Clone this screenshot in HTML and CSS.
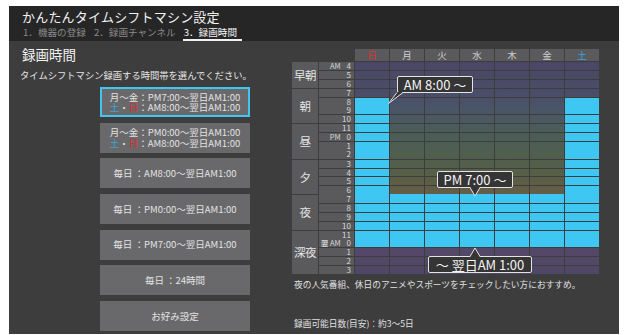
FILE: index.html
```html
<!DOCTYPE html>
<html lang="ja">
<head>
<meta charset="utf-8">
<title>かんたんタイムシフトマシン設定</title>
<link rel="stylesheet" href="styles.css">
</head>
<body>
<div class="screen">
  <header class="hdr">
    <div class="title">かんたんタイムシフトマシン設定</div>
    <nav class="tabs">
      <span class="tab">1．機器の登録</span>
      <span class="tab">2．録画チャンネル</span>
      <span class="tab on">3．録画時間</span>
    </nav>
  </header>
  <main class="main">
    <section class="left">
      <h1 class="sec">録画時間</h1>
      <p class="desc">タイムシフトマシン録画する時間帯を選んでください。</p>
      <div class="btns">
        <div class="btn sel"><span>月〜金：PM7:00〜翌日AM1:00</span><span><i class="sat">土</i>・<i class="sun">日</i>：AM8:00〜翌日AM1:00</span></div>
        <div class="btn"><span>月〜金：PM0:00〜翌日AM1:00</span><span><i class="sat">土</i>・<i class="sun">日</i>：AM8:00〜翌日AM1:00</span></div>
        <div class="btn"><span>毎日 ：AM8:00〜翌日AM1:00</span></div>
        <div class="btn"><span>毎日 ：PM0:00〜翌日AM1:00</span></div>
        <div class="btn"><span>毎日 ：PM7:00〜翌日AM1:00</span></div>
        <div class="btn"><span>毎日 ：24時間</span></div>
        <div class="btn"><span>お好み設定</span></div>
      </div>
    </section>
    <section class="right">
      <div class="chart">
        <div class="col gcol">
          <div class="sp"></div>
          <div class="grp r3">早朝</div>
          <div class="grp r4">朝</div>
          <div class="grp r4">昼</div>
          <div class="grp r4">夕</div>
          <div class="grp r4">夜</div>
          <div class="grp r5">深夜</div>
        </div>
        <div class="col hcol">
          <div class="sp"></div>
          <div class="h"><span><em>AM</em>4</span></div>
          <div class="h"><span>5</span></div>
          <div class="h"><span>6</span></div>
          <div class="h"><span>7</span></div>
          <div class="h r2"><span>8</span><span>9</span></div>
          <div class="h"><span>10</span></div>
          <div class="h"><span>11</span></div>
          <div class="h"><span><em>PM</em>0</span></div>
          <div class="h r2"><span>1</span><span>2</span></div>
          <div class="h"><span>3</span></div>
          <div class="h"><span>4</span></div>
          <div class="h"><span>5</span></div>
          <div class="h r2"><span>6</span><span>7</span></div>
          <div class="h"><span>8</span></div>
          <div class="h"><span>9</span></div>
          <div class="h"><span>10</span></div>
          <div class="h r2"><span>11</span><span><b>翌</b><em>AM</em>0</span></div>
          <div class="h"><span>1</span></div>
          <div class="h"><span>2</span></div>
          <div class="h"><span>3</span></div>
        </div>

        <div class="col dcol">
          <div class="dh sun">日</div>
          <div class="g"></div><div class="g"></div><div class="g"></div><div class="g"></div>
          <div class="b r2"></div><div class="b"></div><div class="b"></div><div class="b"></div>
          <div class="b r2"></div><div class="b"></div><div class="b"></div><div class="b"></div>
          <div class="b r2"></div><div class="b"></div><div class="b"></div><div class="b"></div>
          <div class="b r2"></div><div class="g"></div><div class="g"></div><div class="g"></div>
        </div>
        <div class="col dcol">
          <div class="dh">月</div>
          <div class="g"></div><div class="g"></div><div class="g"></div><div class="g"></div>
          <div class="g r2"></div><div class="g"></div><div class="g"></div><div class="g"></div>
          <div class="g r2"></div><div class="g"></div><div class="g"></div><div class="g"></div>
          <div class="x r2"></div><div class="b"></div><div class="b"></div><div class="b"></div>
          <div class="b r2"></div><div class="g"></div><div class="g"></div><div class="g"></div>
        </div>
        <div class="col dcol">
          <div class="dh">火</div>
          <div class="g"></div><div class="g"></div><div class="g"></div><div class="g"></div>
          <div class="g r2"></div><div class="g"></div><div class="g"></div><div class="g"></div>
          <div class="g r2"></div><div class="g"></div><div class="g"></div><div class="g"></div>
          <div class="x r2"></div><div class="b"></div><div class="b"></div><div class="b"></div>
          <div class="b r2"></div><div class="g"></div><div class="g"></div><div class="g"></div>
        </div>
        <div class="col dcol">
          <div class="dh">水</div>
          <div class="g"></div><div class="g"></div><div class="g"></div><div class="g"></div>
          <div class="g r2"></div><div class="g"></div><div class="g"></div><div class="g"></div>
          <div class="g r2"></div><div class="g"></div><div class="g"></div><div class="g"></div>
          <div class="x r2"></div><div class="b"></div><div class="b"></div><div class="b"></div>
          <div class="b r2"></div><div class="g"></div><div class="g"></div><div class="g"></div>
        </div>
        <div class="col dcol">
          <div class="dh">木</div>
          <div class="g"></div><div class="g"></div><div class="g"></div><div class="g"></div>
          <div class="g r2"></div><div class="g"></div><div class="g"></div><div class="g"></div>
          <div class="g r2"></div><div class="g"></div><div class="g"></div><div class="g"></div>
          <div class="x r2"></div><div class="b"></div><div class="b"></div><div class="b"></div>
          <div class="b r2"></div><div class="g"></div><div class="g"></div><div class="g"></div>
        </div>
        <div class="col dcol">
          <div class="dh">金</div>
          <div class="g"></div><div class="g"></div><div class="g"></div><div class="g"></div>
          <div class="g r2"></div><div class="g"></div><div class="g"></div><div class="g"></div>
          <div class="g r2"></div><div class="g"></div><div class="g"></div><div class="g"></div>
          <div class="x r2"></div><div class="b"></div><div class="b"></div><div class="b"></div>
          <div class="b r2"></div><div class="g"></div><div class="g"></div><div class="g"></div>
        </div>
        <div class="col dcol">
          <div class="dh sat">土</div>
          <div class="g"></div><div class="g"></div><div class="g"></div><div class="g"></div>
          <div class="b r2"></div><div class="b"></div><div class="b"></div><div class="b"></div>
          <div class="b r2"></div><div class="b"></div><div class="b"></div><div class="b"></div>
          <div class="b r2"></div><div class="b"></div><div class="b"></div><div class="b"></div>
          <div class="b r2"></div><div class="g"></div><div class="g"></div><div class="g"></div>
        </div>

        <div class="tip tip1">AM 8:00 〜
          <svg class="tail tail1" width="16" height="12" viewBox="0 0 16 12"><polygon points="9,0 15,0 0.5,11.5" fill="#353535"/><polyline points="9,0.5 0.5,11.5 15,0.5" fill="none" stroke="#e4e4e4" stroke-width="1"/></svg>
        </div>
        <div class="tip tip2">PM 7:00 〜
          <svg class="tail tail2" width="12" height="10" viewBox="0 0 12 10"><polygon points="1,0 11,0 6,9" fill="#353535"/><polyline points="1,0.5 6,9 11,0.5" fill="none" stroke="#e4e4e4" stroke-width="1"/></svg>
        </div>
        <div class="tip tip3">〜 翌日AM 1:00
          <svg class="tail tail3" width="12" height="10" viewBox="0 0 12 10"><polygon points="1,10 11,10 6,1" fill="#353535"/><polyline points="1,9.5 6,1 11,9.5" fill="none" stroke="#e4e4e4" stroke-width="1"/></svg>
        </div>
      </div>
      <p class="note">夜の人気番組、休日のアニメやスポーツをチェックしたい方におすすめ。</p>
      <p class="days">録画可能日数(目安)：約3〜5日</p>
    </section>
  </main>
</div>
</body>
</html>
```

FILE: styles.css
```css
html, body {
  margin: 0;
  padding: 0;
  background: #ffffff;
}
body {
  font-family: "Noto Sans CJK JP", "Noto Sans", sans-serif;
}

.screen {
  margin: 6px 0 0 9px;
  width: 610px;
  height: 328px;
  background: #3d3d3d;
  display: flex;
  flex-direction: column;
  overflow: hidden;
}

/* header */
.hdr {
  flex: none;
  height: 35px;
  box-sizing: border-box;
  background: #262626;
  padding: 3px 0 0 13px;
}
.title {
  font-size: 13px;
  line-height: 15px;
  color: #f2f2f2;
  letter-spacing: 0.2px;
}
.tabs {
  display: flex;
  margin-top: 3px;
  font-size: 9.6px;
  line-height: 11px;
  color: #8a8a8a;
}
.tab {
  padding: 0 1px 3px;
  margin-right: 6px;
}
.tab.on {
  color: #f5f5f5;
  padding: 0 5px 1px 1px;
  border-bottom: 2px solid #f2f2f2;
}

/* main */
.main {
  flex: 1;
  display: flex;
}
.left {
  flex: none;
  width: 283px;
  box-sizing: border-box;
  padding-left: 11px;
}
.sec {
  margin: 5px 0 0 2px;
  font-size: 13.5px;
  line-height: 16px;
  font-weight: normal;
  color: #f0f0f0;
}
.desc {
  margin: 7px 0 0;
  font-size: 9.3px;
  line-height: 12px;
  color: #e6e6e6;
  white-space: nowrap;
}
.btns {
  margin: 6px 0 0 80px;
  display: flex;
  flex-direction: column;
  gap: 5.67px;
}
.btn {
  width: 150px;
  height: 30px;
  box-sizing: border-box;
  background: #69696b;
  color: #e2e2e2;
  font-size: 9.5px;
  line-height: 10.5px;
  display: flex;
  flex-direction: column;
  justify-content: center;
  align-items: center;
  white-space: nowrap;
}
.btn.sel {
  border: 2px solid #42c6f0;
}
.sat {
  color: #38a6d6;
  font-style: normal;
}
.sun {
  color: #e02a2a;
  font-style: normal;
}

/* right / chart */
.right {
  padding-top: 8px;
}
.chart {
  display: flex;
  gap: 1px;
  position: relative;
}
.col {
  display: grid;
  grid-template-rows: 12px repeat(24, 7.875px);
  row-gap: 1px;
}
.gcol { width: 26px; }
.hcol { width: 35px; }
.dcol { width: 34px; }

.r2 { grid-row: span 2; }
.r3 { grid-row: span 3; }
.r4 { grid-row: span 4; }
.r5 { grid-row: span 5; }

.grp {
  background: #5a5a5c;
  color: #e4e4e4;
  font-size: 11.5px;
  display: flex;
  align-items: center;
  justify-content: center;
  white-space: nowrap;
  letter-spacing: -0.5px;
}
.h {
  background: #5a5a5c;
  color: #d8d8d8;
  font-size: 8px;
  display: flex;
  flex-direction: column;
  justify-content: space-around;
  align-items: flex-end;
  padding-right: 3px;
  line-height: 8px;
}
.h span {
  display: flex;
  align-items: center;
}
.h em {
  font-style: normal;
  font-size: 7.5px;
  margin-right: 6px;
}
.h b {
  font-weight: normal;
  font-size: 6.5px;
  line-height: 7px;
  background: #7a7a7c;
  color: #e8e8e8;
  margin-right: 2px;
}

.dh {
  background: #5a5a5c;
  color: #cfcfcf;
  font-size: 9.5px;
  line-height: 12px;
  text-align: center;
}
.dh.sun { color: #d83434; }
.dh.sat { color: #36a8da; }

.g {
  background: linear-gradient(to bottom,
    #4a4766 62px, #4a4d68 92px, #4a5567 110px, #4b5c5b 128px,
    #4d5e51 148px, #535f4a 166px, #5c5e45 182px, #665d48 195px,
    #554868 247px, #4f4767 274px) fixed;
}
.b {
  background: #3fc7f3;
}
.x {
  background:
    linear-gradient(to bottom, transparent 49%, #3fc7f3 49%) scroll,
    linear-gradient(to bottom,
    #4a4766 62px, #4a4d68 92px, #4a5567 110px, #4b5c5b 128px,
    #4d5e51 148px, #535f4a 166px, #5c5e45 182px, #665d48 195px,
    #554868 247px, #4f4767 274px) fixed;
}

/* balloons */
.tip {
  position: absolute;
  box-sizing: border-box;
  height: 17px;
  background: #353535;
  border: 1px solid #e4e4e4;
  border-radius: 2px;
  color: #f4f4f4;
  font-size: 13px;
  line-height: 15px;
  text-align: center;
  white-space: nowrap;
}
.tip1 { left: 105px; top: 27px; width: 76px; }
.tip2 { left: 145px; top: 122px; width: 76px; }
.tip3 { left: 136px; top: 207px; width: 104px; }
.tail {
  position: absolute;
  display: block;
}
.tail1 { left: -10px; top: 15px; }
.tail2 { left: 31px; top: 15px; }
.tail3 { left: 40px; top: -10px; }

.note {
  margin: 5px 0 0 2px;
  font-size: 8.7px;
  line-height: 12px;
  color: #e0e0e0;
  white-space: nowrap;
}
.days {
  margin: 27px 0 0 2px;
  font-size: 8.7px;
  line-height: 12px;
  color: #e0e0e0;
  white-space: nowrap;
}
```
